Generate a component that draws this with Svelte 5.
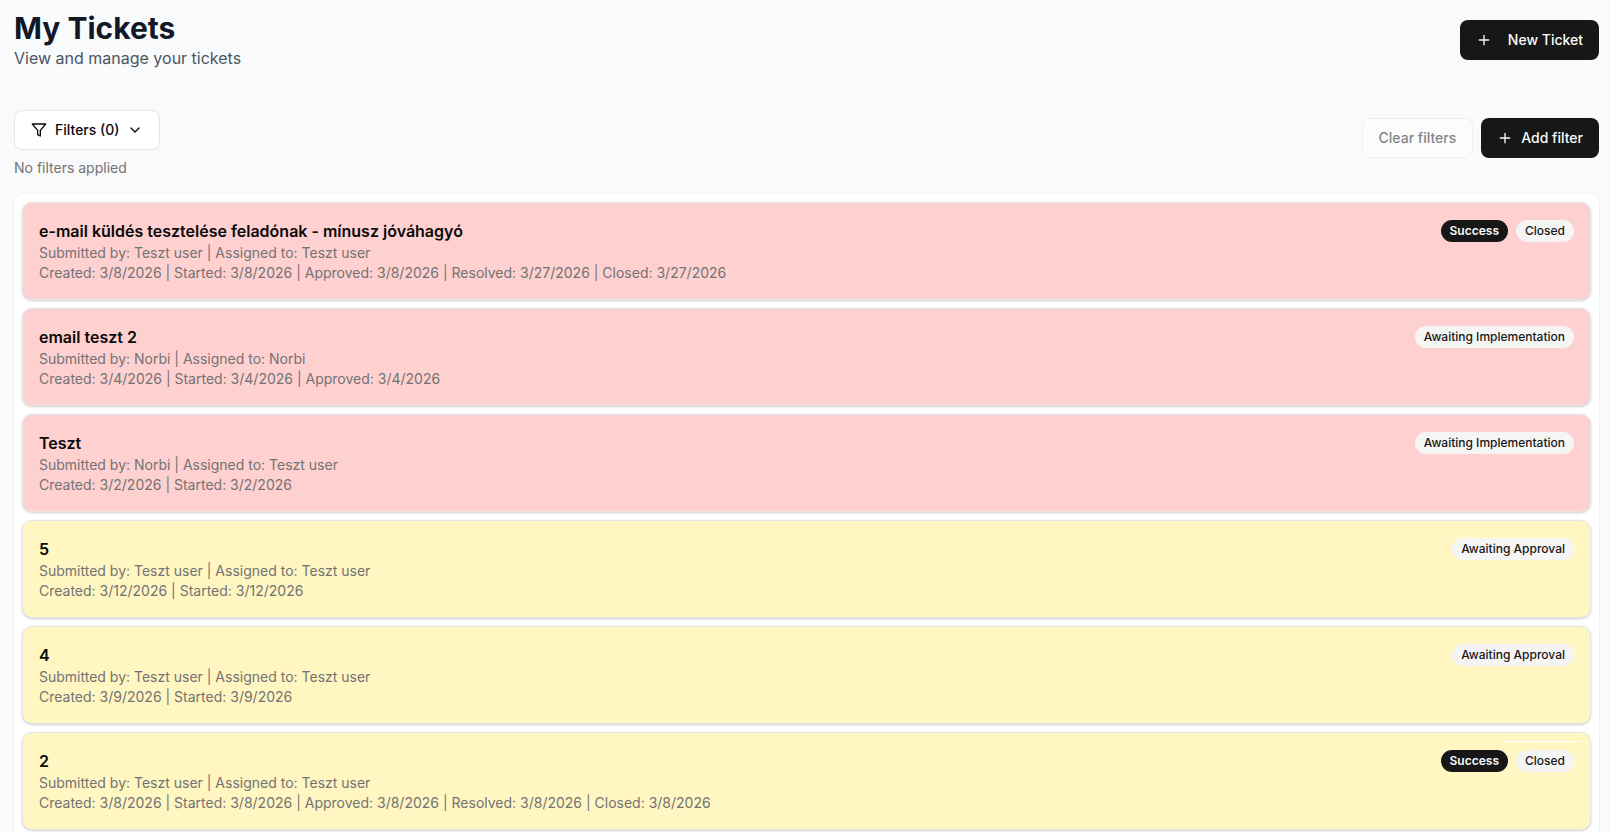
<script>
  const tickets = [
    {
      title: 'e-mail küldés tesztelése feladónak - mínusz jóváhagyó',
      submittedBy: 'Teszt user',
      assignedTo: 'Teszt user',
      dates: { Created: '3/8/2026', Started: '3/8/2026', Approved: '3/8/2026', Resolved: '3/27/2026', Closed: '3/27/2026' },
      result: 'Success',
      status: 'Closed',
      tone: 'red',
    },
    {
      title: 'email teszt 2',
      submittedBy: 'Norbi',
      assignedTo: 'Norbi',
      dates: { Created: '3/4/2026', Started: '3/4/2026', Approved: '3/4/2026' },
      status: 'Awaiting Implementation',
      tone: 'red',
    },
    {
      title: 'Teszt',
      submittedBy: 'Norbi',
      assignedTo: 'Teszt user',
      dates: { Created: '3/2/2026', Started: '3/2/2026' },
      status: 'Awaiting Implementation',
      tone: 'red',
    },
    {
      title: '5',
      submittedBy: 'Teszt user',
      assignedTo: 'Teszt user',
      dates: { Created: '3/12/2026', Started: '3/12/2026' },
      status: 'Awaiting Approval',
      tone: 'yellow',
    },
    {
      title: '4',
      submittedBy: 'Teszt user',
      assignedTo: 'Teszt user',
      dates: { Created: '3/9/2026', Started: '3/9/2026' },
      status: 'Awaiting Approval',
      tone: 'yellow',
    },
    {
      title: '2',
      submittedBy: 'Teszt user',
      assignedTo: 'Teszt user',
      dates: { Created: '3/8/2026', Started: '3/8/2026', Approved: '3/8/2026', Resolved: '3/8/2026', Closed: '3/8/2026' },
      result: 'Success',
      status: 'Closed',
      tone: 'yellow',
      marked: true,
    },
  ];

  let filters = $state([]);

  /** @param {Record<string, string>} dates */
  function formatDates(dates) {
    return Object.entries(dates)
      .map(([label, date]) => `${label}: ${date}`)
      .join(' | ');
  }
</script>

{#snippet plusIcon()}
  <svg class="icon" viewBox="0 0 24 24" aria-hidden="true">
    <path d="M5 12h14M12 5v14" />
  </svg>
{/snippet}

<main class="page">
  <header class="page-header">
    <div>
      <h1>My Tickets</h1>
      <p class="subtitle">View and manage your tickets</p>
    </div>
    <button type="button" class="button button-primary button-wide-gap">
      {@render plusIcon()}
      New Ticket
    </button>
  </header>

  <section class="toolbar">
    <div class="filter-summary">
      <button type="button" class="button button-outline" aria-expanded="false">
        <svg class="icon" viewBox="0 0 24 24" aria-hidden="true">
          <polygon points="22 3 2 3 10 12.46 10 19 14 21 14 12.46 22 3" />
        </svg>
        Filters ({filters.length})
        <svg class="icon" viewBox="0 0 24 24" aria-hidden="true">
          <path d="m6 9 6 6 6-6" />
        </svg>
      </button>
      {#if filters.length === 0}
        <p class="filter-note">No filters applied</p>
      {/if}
    </div>
    <div class="toolbar-actions">
      <button
        type="button"
        class="button button-outline"
        disabled={filters.length === 0}
        onclick={() => (filters = [])}
      >
        Clear filters
      </button>
      <button type="button" class="button button-primary">
        {@render plusIcon()}
        Add filter
      </button>
    </div>
  </section>

  <section class="ticket-list" aria-label="Tickets">
    {#each tickets as ticket}
      <article class="ticket {ticket.tone}" class:marked={ticket.marked}>
        <div>
          <h2>{ticket.title}</h2>
          <p>Submitted by: {ticket.submittedBy} | Assigned to: {ticket.assignedTo}</p>
          <p>{formatDates(ticket.dates)}</p>
        </div>
        <div class="badges">
          {#if ticket.result}
            <span class="badge badge-dark">{ticket.result}</span>
          {/if}
          <span class="badge">{ticket.status}</span>
        </div>
      </article>
    {/each}
  </section>
</main>

<style>
  :global(body) {
    background: #f9fafb;
    color: #0a0a0a;
    font-family: Inter, 'Liberation Sans', sans-serif;
    font-size: 14px;
    line-height: 20px;
  }

  h1,
  h2,
  p {
    margin: 0;
  }

  .page {
    padding: 10px 12px 0 14px;
  }

  .page-header,
  .toolbar {
    display: flex;
    justify-content: space-between;
  }

  .page-header {
    align-items: center;
    margin-bottom: 40px;
  }

  h1 {
    color: #111827;
    font-size: 30px;
    font-weight: 700;
    line-height: 36px;
  }

  .subtitle {
    color: #4b5563;
    font-size: 16px;
    line-height: 24px;
  }

  .button {
    display: inline-flex;
    align-items: center;
    justify-content: center;
    gap: 8px;
    height: 40px;
    padding: 0 16px;
    border: 0;
    border-radius: 8px;
    font-family: inherit;
    font-size: 14px;
    font-weight: 500;
    line-height: 20px;
    white-space: nowrap;
    cursor: pointer;
  }

  .button-primary {
    color: #fafafa;
    background: #171717;
  }

  .button-primary:hover {
    background: #2e2e2e;
  }

  .button-wide-gap {
    gap: 16px;
  }

  .button-outline {
    border: 1px solid #e5e5e5;
    color: #0a0a0a;
    background: #ffffff;
  }

  .button-outline:hover:not(:disabled) {
    background: #f5f5f5;
  }

  .button:disabled {
    cursor: default;
    opacity: 0.5;
  }

  .icon {
    flex: none;
    width: 16px;
    height: 16px;
    fill: none;
    stroke: currentColor;
    stroke-width: 2;
    stroke-linecap: round;
    stroke-linejoin: round;
  }

  .toolbar {
    align-items: flex-start;
    margin-bottom: 16px;
  }

  .filter-summary {
    display: flex;
    flex-direction: column;
    align-items: flex-start;
    gap: 8px;
  }

  .filter-note {
    color: #737373;
  }

  .toolbar-actions {
    display: flex;
    gap: 8px;
    padding-top: 8px;
  }

  .ticket-list {
    display: flex;
    flex-direction: column;
    gap: 8px;
    padding: 8px;
    border-radius: 10px;
    background: #ffffff;
    box-shadow: 0 1px 3px rgb(0 0 0 / 0.1);
  }

  .ticket {
    display: flex;
    align-items: flex-start;
    justify-content: space-between;
    gap: 16px;
    padding: 16px;
    border: 1px solid #e5e5e5;
    border-radius: 10px;
    box-shadow: 0 1px 3px rgb(0 0 0 / 0.1), 0 1px 2px rgb(0 0 0 / 0.1);
  }

  .ticket.red {
    background: #ffd0d0;
  }

  .ticket.yellow {
    background: #fff6c2;
  }

  .ticket h2 {
    font-size: 16px;
    font-weight: 600;
    line-height: 24px;
  }

  .ticket p {
    color: #737373;
  }

  .ticket.marked {
    position: relative;
  }

  .ticket.marked::after {
    content: '';
    position: absolute;
    top: 8px;
    right: 9px;
    width: 77px;
    height: 1px;
    background: #ffffff;
  }

  .badges {
    display: flex;
    flex: none;
    gap: 8px;
    padding-top: 1px;
  }

  .badge {
    padding: 2px 9px;
    border-radius: 999px;
    color: #171717;
    background: #f5f5f5;
    font-size: 12px;
    font-weight: 500;
    line-height: 18px;
  }

  .badge-dark {
    color: #fafafa;
    background: #171717;
    font-weight: 600;
  }
</style>
